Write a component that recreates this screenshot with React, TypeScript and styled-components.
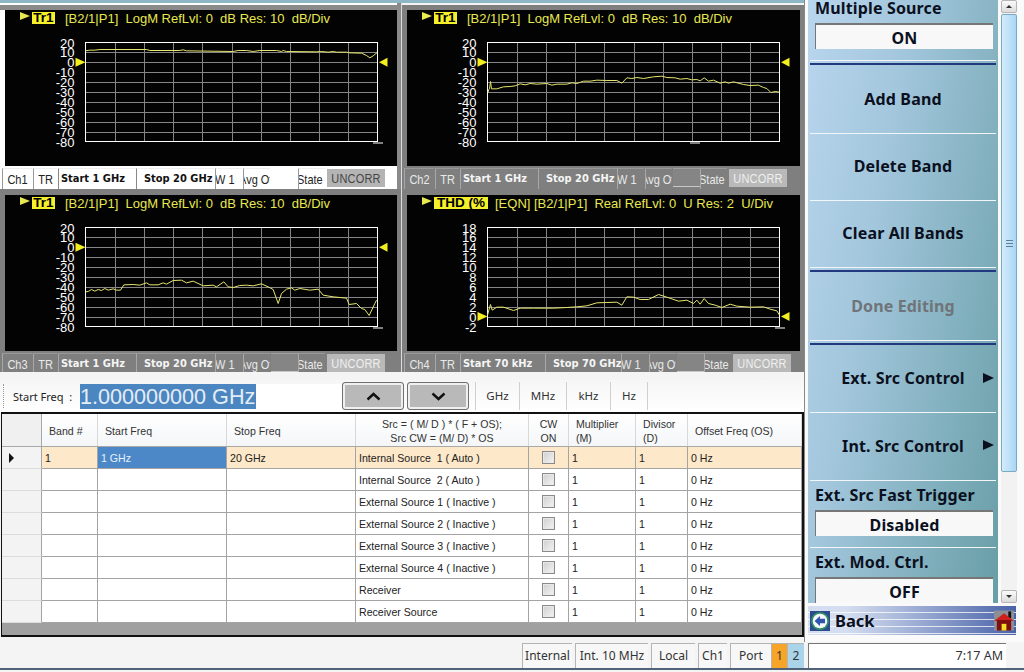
import React from "react";
import styled, { createGlobalStyle } from "styled-components";

const UI_FONT = `"Noto Sans", "Liberation Sans", sans-serif`;
const ARIAL = `"Liberation Sans", Arial, sans-serif`;
const BOLD_FONT = `"DejaVu Sans", Verdana, sans-serif`;
const YELLOW = "#e8e850";

const GRID_W = 292;
const GRID_H = 99;
const GRID_X = 80.5;
const GRID_Y = 8.5;

type Point = [number, number];

const GlobalStyle = createGlobalStyle`
  html, body {
    margin: 0;
    padding: 0;
    background: #f4f4f4;
    overflow: hidden;
  }
`;

const Screen = styled.div`
  width: 1024px;
  height: 672px;
  display: flex;
  flex-direction: column;
  background: #f4f4f4;
  overflow: hidden;
`;

const Main = styled.div`
  display: flex;
  height: 642px;
`;

const LeftColumn = styled.div`
  width: 804px;
  display: flex;
  flex-direction: column;
`;

const TopStrip = styled.div`
  height: 3px;
  background: #8fb6c4;
`;

const ChannelGrid = styled.div`
  display: grid;
  grid-template-columns: 401px 403px;
  grid-template-rows: 186px 183px;
  height: 369px;
`;

const ChannelBox = styled.div<{ $active?: boolean; $col: number; $row: number }>`
  display: flex;
  flex-direction: column;
  box-sizing: border-box;
  overflow: hidden;
  background: ${(p) =>
    p.$active
      ? "linear-gradient(#ffffff 2px, #8a8a8a 2px 7px, #ffffff 7px)"
      : p.$row === 0
        ? "linear-gradient(#f4f4f4 2px, #7f7f7f 2px)"
        : "#7f7f7f"};
  padding: ${(p) => (p.$row === 0 ? "7px" : "6px")} 4px 0 5px;
  border-left: ${(p) => (p.$col === 1 ? "1px solid #dcdcdc" : "0")};
  box-shadow: ${(p) => (p.$active ? "inset -4px 0 0 #8a8a8a" : "none")};
`;

const Plot = styled.div`
  height: 156px;
  background: #030303;
  flex: none;
  display: flex;
  flex-direction: column;
`;

const TitleRow = styled.div`
  height: 16px;
  margin-bottom: 8px;
  flex: none;
  display: flex;
  align-items: center;
  padding: 0 0 0 15px;
  color: ${YELLOW};
  font: 13px ${ARIAL};
  white-space: pre;
`;

const Pointer = styled.span`
  width: 0;
  height: 0;
  border-left: 10px solid ${YELLOW};
  border-top: 4px solid transparent;
  border-bottom: 4px solid transparent;
  margin: -4px 2px 0 0;
`;

const Badge = styled.span<{ $w: number }>`
  width: ${(p) => p.$w}px;
  height: 12px;
  background: #f6f02a;
  color: #000;
  font: 700 13.5px/12px ${ARIAL};
  text-align: center;
  margin-right: ${(p) => (p.$w > 30 ? 7 : 10)}px;
`;

const PlotSvg = styled.svg`
  display: block;
  flex: none;
`;

const AxisLabel = styled.text`
  fill: #ffffff;
  font: 13px ${ARIAL};
  text-anchor: end;
`;

const InfoBar = styled.div<{ $active?: boolean }>`
  height: 21px;
  margin: 2px 0 0 -3px;
  display: flex;
  align-items: stretch;
  color: ${(p) => (p.$active ? "#222" : "#e9e9e9")};
`;

const InfoCell = styled.div<{ $w: number; $active?: boolean }>`
  width: ${(p) => p.$w}px;
  flex: none;
  overflow: hidden;
  white-space: nowrap;
  font: 11px/21px ${ARIAL};
  text-align: center;
  margin-right: 1px;
  border-top: 1px solid ${(p) => (p.$active ? "#eeeeee" : "#999")};
  border-left: 1px solid ${(p) => (p.$active ? "#999" : "#a8a8a8")};
  box-sizing: border-box;
  span {
    display: inline-block;
    transform: scale(1, 1.2);
  }
`;

const ClippedCell = styled(InfoCell)<{ $shift: number }>`
  text-align: left;
  span {
    margin-left: ${(p) => p.$shift}px;
  }
`;

const BoldCell = styled.div<{ $w: number; $pad: number; $active?: boolean }>`
  width: ${(p) => p.$w}px;
  flex: none;
  font: 700 9.9px/20px ${BOLD_FONT};
  color: ${(p) => (p.$active ? "#111" : "#f5f5f5")};
  white-space: nowrap;
  padding-left: ${(p) => p.$pad}px;
  box-sizing: border-box;
  border-left: 1px solid ${(p) => (p.$active ? "#888" : "#a8a8a8")};
  border-top: 1px solid ${(p) => (p.$active ? "#eee" : "#999")};
`;

const BlankCell = styled.div<{ $active?: boolean }>`
  width: 27px;
  flex: none;
  margin-bottom: 2px;
  background: ${(p) => (p.$active ? "#ffffff" : "#858585")};
  border-bottom: 1px solid ${(p) => (p.$active ? "#fff" : "#c8c8c8")};
  border-top: 1px solid ${(p) => (p.$active ? "#fff" : "#a0a0a0")};
`;

const UncorrCell = styled(InfoCell)`
  height: 18px;
  line-height: 18px;
  margin: 1px 0 0 1px;
  background: ${(p) => (p.$active ? "#b4b4b4" : "#b9b9b9")};
  color: ${(p) => (p.$active ? "#444" : "#efefef")};
  border: 0;
  letter-spacing: 0.2px;
`;

const Gap = styled.div`
  height: 8px;
  background: #f4f4f4;
`;

const EntryBar = styled.div`
  height: 32px;
  display: flex;
  align-items: center;
  background: linear-gradient(#f6f6f6, #fff);
  padding-left: 3px;
  box-sizing: border-box;
  font: 11px ${UI_FONT};
  color: #222;
`;

const Grip = styled.div`
  width: 1px;
  height: 24px;
  border-left: 1px dotted #999;
`;

const EntryLabel = styled.div`
  width: 67px;
  padding-left: 8px;
  flex: none;
  white-space: pre;
`;

const EntryInput = styled.div`
  width: 262px;
  height: 25px;
  flex: none;
  background: #fff;
`;

const Selected = styled.span`
  display: inline-block;
  width: 176px;
  height: 25px;
  background: #4c86c0;
  color: #e4edf6;
  font: 21.6px/25px ${ARIAL};
  white-space: nowrap;
`;

const StepButton = styled.button`
  width: 62px;
  height: 28px;
  padding: 0;
  flex: none;
  margin-right: 3px;
  background: #b9b9b9;
  border: 1px solid #707070;
  border-radius: 3px;
  box-shadow: inset 0 0 0 2px #f0f0f0;
  display: flex;
  align-items: center;
  justify-content: center;
`;

const UnitList = styled.div`
  display: flex;
  margin-left: 3px;
  height: 28px;
  border-left: 1px solid #cfcfcf;
`;

const Unit = styled.div<{ $w: number }>`
  width: ${(p) => p.$w}px;
  text-align: center;
  border-right: 1px solid #cfcfcf;
  font: 11.5px/28px ${UI_FONT};
  color: #333;
`;

const Table = styled.div`
  height: 225px;
  margin-left: 1px;
  border: 2px solid #111;
  border-left-width: 1px;
  box-sizing: border-box;
  background: #a0a0a0;
  font: 10.6px ${ARIAL};
  color: #222;
  overflow: hidden;
`;

const COLUMNS = "40px 56px 129px 129px 173px 40px 67px 52px 1fr";

const HeaderRow = styled.div`
  display: grid;
  grid-template-columns: ${COLUMNS};
  height: 33px;
  background: linear-gradient(#ffffff, #f4f6f8);
  border-bottom: 1px solid #a8a8a8;
  box-sizing: border-box;
`;

const HeaderCell = styled.div<{ $center?: boolean }>`
  display: flex;
  flex-direction: column;
  justify-content: center;
  align-items: ${(p) => (p.$center ? "center" : "flex-start")};
  padding: 1px ${(p) => (p.$center ? "0" : "7px")} 0;
  line-height: 14px;
  border-right: 1px solid #d8d8d8;
  color: #333;
  white-space: pre;
`;

const CornerCell = styled(HeaderCell)`
  background: #f0f0f0;
  border-right: 1px solid #a8a8a8;
`;

const Row = styled.div<{ $current?: boolean }>`
  display: grid;
  grid-template-columns: ${COLUMNS};
  height: 22px;
  background: ${(p) => (p.$current ? "#fde8c9" : "#ffffff")};
`;

const Cell = styled.div<{ $selected?: boolean }>`
  padding-left: 3px;
  line-height: 23px;
  border-right: 1px solid #a4a4a4;
  border-bottom: 1px solid #a4a4a4;
  white-space: pre;
  background: ${(p) => (p.$selected ? "#4c88c8" : "transparent")};
  color: ${(p) => (p.$selected ? "#e8f0f8" : "#222")};
  overflow: hidden;
`;

const RowHead = styled.div`
  background: #f3f3f3;
  border-right: 1px solid #a4a4a4;
  border-bottom: 1px solid #dcdcdc;
  display: flex;
  align-items: center;
  padding-left: 7px;
`;

const RowArrow = styled.span`
  width: 0;
  height: 0;
  border-left: 5px solid #111;
  border-top: 5px solid transparent;
  border-bottom: 5px solid transparent;
`;

const CheckCell = styled.div`
  display: flex;
  align-items: center;
  justify-content: center;
  border-right: 1px solid #a4a4a4;
  border-bottom: 1px solid #a4a4a4;
`;

const CheckBox = styled.span`
  width: 11px;
  height: 11px;
  border: 1px solid #8a8a8a;
  background: linear-gradient(135deg, #cfcfcf, #f4f4f4);
  box-shadow: inset 0 0 0 1px #e8e8e8;
`;

const RightColumn = styled.div`
  width: 220px;
  display: flex;
  flex-direction: column;
  padding: 0 0 0 3px;
  box-sizing: border-box;
  background: #fafafa;
  border-left: 1px solid #888;
`;

const KeyRow = styled.div`
  height: 603px;
  display: flex;
  flex: none;
`;

const KeyPanel = styled.div`
  width: 190px;
  height: 603px;
  overflow: hidden;
  flex: none;
  background: linear-gradient(100deg, #b9d6ef 0%, #a2c6dc 36%, #689ea6 100%);
  display: flex;
  flex-direction: column;
  align-items: stretch;
  color: #0b1020;
  font: 700 16px ${UI_FONT};
  letter-spacing: 0.15px;
`;

const FieldLabel = styled.div<{ $h: number }>`
  height: ${(p) => p.$h}px;
  padding-left: 7px;
  display: flex;
  align-items: flex-end;
  line-height: 18px;
  white-space: nowrap;
  flex: none;
`;

const FieldValue = styled.div`
  height: 26px;
  flex: none;
  margin: 6px 5px 0 7px;
  line-height: 27px;
  text-align: center;
  background: #f8f8f8;
  border-top: 2px solid #777;
  border-left: 1px solid #777;
  box-sizing: border-box;
`;

const Divider = styled.div<{ $double?: boolean; $mt?: number }>`
  flex: none;
  height: 1px;
  margin: ${(p) => p.$mt ?? 0}px 2px 0 2px;
  background: #f2f6f8;
  ${(p) => p.$double && "height: 6px; background: linear-gradient(#f2f6f8 0 1px, transparent 1px 3px, #22397f 3px 5px, transparent 5px);"}
`;

const SoftKey = styled.div<{ $disabled?: boolean; $h?: number }>`
  height: ${(p) => p.$h ?? 66}px;
  flex: none;
  box-sizing: border-box;
  padding-bottom: 2px;
  position: relative;
  display: flex;
  align-items: center;
  justify-content: center;
  color: ${(p) => (p.$disabled ? "#6f7478" : "#0b1020")};
  white-space: nowrap;
`;

const SubArrow = styled.span`
  position: absolute;
  right: 4px;
  top: 27px;
  width: 0;
  height: 0;
  border-left: 11px solid #0b1020;
  border-top: 5px solid transparent;
  border-bottom: 5px solid transparent;
`;

const ScrollBar = styled.div`
  width: 16px;
  margin-left: 3px;
  display: flex;
  flex-direction: column;
  background: #f2f2f2;
`;

const ScrollButton = styled.div`
  height: 13px;
  flex: none;
  background: linear-gradient(#fbfbfb, #dcdcdc);
  border: 1px solid #b5b5b5;
  border-radius: 2px;
  box-sizing: border-box;
  display: flex;
  align-items: center;
  justify-content: center;
`;

const ScrollArrow = styled.span<{ $down?: boolean }>`
  width: 0;
  height: 0;
  border-left: 3px solid transparent;
  border-right: 3px solid transparent;
  ${(p) => (p.$down ? "border-top: 3px solid #333;" : "border-bottom: 3px solid #333;")}
`;

const ScrollThumb = styled.div`
  height: 458px;
  flex: none;
  margin-top: 1px;
  background: linear-gradient(90deg, #d4ecfb, #a9d6f5);
  border: 1px solid #7aa9c6;
  border-radius: 2px;
  box-sizing: border-box;
  display: flex;
  align-items: center;
  justify-content: center;
`;

const ThumbGrip = styled.span`
  width: 7px;
  height: 7px;
  background: repeating-linear-gradient(#5d7f95 0 1px, transparent 1px 3px);
`;

const ScrollTrack = styled.div`
  flex: 1;
`;

const BackBar = styled.div`
  height: 29px;
  width: 208px;
  margin-top: 3px;
  flex: none;
  display: flex;
  align-items: center;
  justify-content: space-between;
  padding: 0 2px;
  box-sizing: border-box;
  background:
    repeating-linear-gradient(transparent 0 6px, rgba(255, 255, 255, 0.75) 6px 7px),
    linear-gradient(90deg, #d5def0 0%, #d5def0 18%, #a0b0d6 50%, #4a63a8 100%);
`;

const BackLabel = styled.div`
  display: flex;
  align-items: center;
  gap: 5px;
  font: 700 16.5px ${UI_FONT};
  color: #0a0f20;
`;

const StatusBar = styled.div`
  height: 28px;
  display: flex;
  box-sizing: border-box;
  padding: 1px 0 0 0;
  border-bottom: 2px solid #4f6478;
  justify-content: flex-end;
  font: 12px ${UI_FONT};
  color: #333;
`;

const StatusItem = styled.div<{ $w: number; $bg?: string }>`
  width: ${(p) => p.$w}px;
  height: 25px;
  flex: none;
  margin-right: ${(p) => (p.$bg ? 0 : 3)}px;
  line-height: 24px;
  text-align: center;
  box-sizing: border-box;
  background: ${(p) => p.$bg ?? "#f7f7f7"};
  border-top: 1px solid #b4b4b4;
  border-left: 1px solid #b4b4b4;
`;

const TimeBox = styled.div`
  width: 198px;
  height: 25px;
  margin: 0 18px 0 4px;
  flex: none;
  padding-right: 3px;
  text-align: right;
  box-sizing: border-box;
  background: #ffffff;
  border-top: 1px solid #777;
  border-left: 1px solid #777;
  font: 12.5px/24px ${UI_FONT};
`;

const LOG_LABELS = ["20", "10", "0", "-10", "-20", "-30", "-40", "-50", "-60", "-70", "-80"];
const THD_LABELS = ["18", "16", "14", "12", "10", "8", "6", "4", "2", "0", "-2"];

// trace points read off the 3x crops, [x, y] on that crop
const TRACE_1: Point[] = [[257,152],[270,150],[285,150],[300,148],[440,148],[450,151],[540,151],[550,149],[560,152],[700,154],[715,151],[740,151],[760,154],[780,151],[830,151],[845,154],[850,151],[860,154],[950,155],[965,154],[985,156],[1000,154],[1010,156],[1040,156],[1050,158],[1085,159],[1100,166],[1110,173],[1120,167],[1132,157]];
const TRACE_2: Point[] = [[263,278],[266,268],[268,266],[271,244],[274,266],[290,266],[310,260],[330,259],[345,257],[360,251],[375,254],[390,250],[410,252],[440,250],[455,255],[470,252],[500,252],[515,248],[530,250],[550,243],[570,243],[590,240],[620,241],[650,241],[665,249],[680,233],[695,235],[710,232],[730,235],[760,230],[785,228],[800,232],[825,233],[840,237],[860,235],[875,239],[890,238],[900,242],[912,233],[925,243],[940,240],[960,249],[975,245],[985,249],[1000,245],[1030,253],[1050,256],[1075,255],[1090,262],[1100,265],[1112,277],[1125,274],[1138,276]];
const TRACE_3: Point[] = [[257,305],[265,304],[275,298],[285,303],[295,298],[305,301],[315,295],[325,300],[340,296],[350,300],[362,300],[372,284],[400,283],[420,285],[440,278],[450,284],[475,284],[490,278],[500,282],[520,271],[545,270],[560,278],[580,273],[610,287],[640,285],[650,290],[672,275],[685,290],[700,292],[720,286],[740,285],[760,287],[785,281],[805,290],[820,298],[835,340],[845,310],[860,297],[875,293],[885,300],[900,295],[930,300],[955,297],[970,315],[1000,320],[1040,324],[1048,343],[1070,340],[1085,355],[1095,358],[1108,376],[1125,340],[1130,330]];
const TRACE_4: Point[] = [[262,375],[266,360],[271,343],[276,360],[290,351],[310,351],[340,361],[360,354],[400,354],[460,354],[500,352],[530,350],[560,347],[590,338],[620,337],[650,336],[665,345],[680,320],[700,321],[720,328],[745,328],[775,313],[800,321],[835,333],[860,330],[880,340],[890,330],[900,342],[912,325],[925,340],[945,345],[965,352],[990,342],[1010,348],[1050,351],[1090,350],[1110,357],[1130,362],[1138,375]];

interface ChannelData {
  id: string;
  badge: string;
  badgeW: number;
  title: string;
  labels: string[];
  trace: Point[];
  origin: Point;
  refRow: number;
  tickX: number;
  start: string;
  stop: string;
  startW: number;
  stopW: number;
  col: number;
  row: number;
  active?: boolean;
}

const LOG_TITLE = "[B2/1|P1]  LogM RefLvl: 0  dB Res: 10  dB/Div";

const CHANNELS: ChannelData[] = [
  { id: "Ch1", badge: "Tr1", badgeW: 23, title: LOG_TITLE, labels: LOG_LABELS, trace: TRACE_1, origin: [257, 127], refRow: 2, tickX: 368, start: "Start 1 GHz", stop: "Stop 20 GHz", startW: 78, stopW: 79, col: 0, row: 0, active: true },
  { id: "Ch2", badge: "Tr1", badgeW: 23, title: LOG_TITLE, labels: LOG_LABELS, trace: TRACE_2, origin: [262, 127], refRow: 2, tickX: 283, start: "Start 1 GHz", stop: "Stop 20 GHz", startW: 78, stopW: 79, col: 1, row: 0 },
  { id: "Ch3", badge: "Tr1", badgeW: 23, title: LOG_TITLE, labels: LOG_LABELS, trace: TRACE_3, origin: [257, 112], refRow: 2, tickX: 368, start: "Start 1 GHz", stop: "Stop 20 GHz", startW: 78, stopW: 79, col: 0, row: 1 },
  { id: "Ch4", badge: "THD (%", badgeW: 54, title: "[EQN] [B2/1|P1]  Real RefLvl: 0  U Res: 2  U/Div", labels: THD_LABELS, trace: TRACE_4, origin: [262, 112], refRow: 9, tickX: 368, start: "Start 70 kHz", stop: "Stop 70 GHz", startW: 85, stopW: 76, col: 1, row: 1 },
];

const TABLE_SOURCES = [
  "Internal Source  1 ( Auto )",
  "Internal Source  2 ( Auto )",
  "External Source 1 ( Inactive )",
  "External Source 2 ( Inactive )",
  "External Source 3 ( Inactive )",
  "External Source 4 ( Inactive )",
  "Receiver",
  "Receiver Source",
];

const DIVISIONS = Array.from({ length: 11 }, (_, i) => i);

function ChannelPlot({ data }: { data: ChannelData }) {
  const points = data.trace
    .map(([x, y]) => `${(x - data.origin[0]) / 3 + GRID_X},${(y - data.origin[1]) / 3 + GRID_Y}`)
    .join(" ");
  const refY = GRID_Y + (GRID_H / 10) * data.refRow;
  const right = GRID_X + GRID_W;
  return (
    <PlotSvg width="392" height="122">
      {data.labels.map((label, i) => (
        <AxisLabel key={label} x={GRID_X - 11} y={GRID_Y + (GRID_H / 10) * i + 5}>
          {label}
        </AxisLabel>
      ))}
      {DIVISIONS.slice(1, 10).map((i) => (
        <g key={i} stroke="#858585" strokeWidth="1">
          <line x1={Math.round(GRID_X + (GRID_W / 10) * i) + 0.5} x2={Math.round(GRID_X + (GRID_W / 10) * i) + 0.5} y1={GRID_Y} y2={GRID_Y + GRID_H} />
          <line x1={GRID_X} x2={right} y1={Math.round(GRID_Y + (GRID_H / 10) * i) + 0.5} y2={Math.round(GRID_Y + (GRID_H / 10) * i) + 0.5} />
        </g>
      ))}
      <rect x={GRID_X} y={GRID_Y} width={GRID_W} height={GRID_H} fill="none" stroke="#ffffff" />
      <polyline points={points} fill="none" stroke="#e6e66e" strokeWidth="1" />
      <polygon points={`${GRID_X - 10},${refY - 4.5} ${GRID_X},${refY} ${GRID_X - 10},${refY + 4.5}`} fill="#f2ee20" />
      <polygon points={`${right + 10},${refY - 4.5} ${right + 1.5},${refY} ${right + 10},${refY + 4.5}`} fill="#f2ee20" />
      <line x1={data.tickX} x2={data.tickX + 10} y1={GRID_Y + GRID_H + 1.5} y2={GRID_Y + GRID_H + 1.5} stroke="#ffffff" />
    </PlotSvg>
  );
}

function Channel({ data }: { data: ChannelData }) {
  const active = data.active;
  return (
    <ChannelBox $active={active} $col={data.col} $row={data.row}>
      <Plot>
        <TitleRow>
          <Pointer />
          <Badge $w={data.badgeW}>{data.badge}</Badge>
          {data.title}
        </TitleRow>
        <ChannelPlot data={data} />
      </Plot>
      <InfoBar $active={active}>
        <InfoCell $w={30} $active={active}>
          <span>{data.id}</span>
        </InfoCell>
        <InfoCell $w={24} $active={active}>
          <span>TR</span>
        </InfoCell>
        <BoldCell $w={data.startW} $pad={2} $active={active}>
          {data.start}
        </BoldCell>
        <BoldCell $w={data.stopW} $pad={7} $active={active}>
          {data.stop}
        </BoldCell>
        <ClippedCell $w={27} $shift={-1} $active={active}>
          <span>W 1</span>
        </ClippedCell>
        <ClippedCell $w={27} $shift={-5} $active={active}>
          <span>Avg Off</span>
        </ClippedCell>
        <BlankCell $active={active} />
        <ClippedCell $w={27} $shift={-2} $active={active}>
          <span>State</span>
        </ClippedCell>
        <UncorrCell $w={58} $active={active}>
          <span>UNCORR</span>
        </UncorrCell>
      </InfoBar>
    </ChannelBox>
  );
}

function Chevron({ up }: { up?: boolean }) {
  return (
    <svg width="15" height="9" viewBox="0 0 15 9">
      <polyline points={up ? "1.5,7.5 7.5,2 13.5,7.5" : "1.5,1.5 7.5,7 13.5,1.5"} fill="none" stroke="#111" strokeWidth="2.4" />
    </svg>
  );
}

function BackIcon() {
  return (
    <svg width="20" height="20" viewBox="0 0 22 22">
      <rect width="22" height="22" fill="#2c4a8c" />
      <circle cx="11" cy="11" r="10" fill="#2f8f6a" />
      <circle cx="11" cy="11" r="8" fill="#f4f7fb" />
      <path d="M5 11 L11 5.5 V8.5 H16.5 V13.5 H11 V16.5 Z" fill="#2f55b0" />
    </svg>
  );
}

function HomeIcon() {
  return (
    <svg width="20" height="21" viewBox="0 0 21 21">
      <rect width="21" height="21" fill="#8e8e96" />
      <rect x="15" y="1" width="3" height="7" fill="#111" />
      <path d="M0 11 L10.5 3 L21 11 Z" fill="#d0201c" />
      <rect x="3" y="10" width="15" height="11" fill="#7c1010" />
      <rect x="8" y="14" width="5" height="7" fill="#f4e020" />
    </svg>
  );
}

export default function App() {
  return (
    <Screen>
      <GlobalStyle />
      <Main>
        <LeftColumn>
          <TopStrip />
          <ChannelGrid>
            {CHANNELS.map((channel) => (
              <Channel key={channel.id} data={channel} />
            ))}
          </ChannelGrid>
          <Gap />
          <EntryBar>
            <Grip />
            <EntryLabel>Start Freq  :</EntryLabel>
            <EntryInput>
              <Selected>1.000000000 GHz</Selected>
            </EntryInput>
            <StepButton>
              <Chevron up />
            </StepButton>
            <StepButton>
              <Chevron />
            </StepButton>
            <UnitList>
              <Unit $w={43}>GHz</Unit>
              <Unit $w={46}>MHz</Unit>
              <Unit $w={43}>kHz</Unit>
              <Unit $w={36}>Hz</Unit>
            </UnitList>
          </EntryBar>
          <Table>
            <HeaderRow>
              <CornerCell />
              <HeaderCell>Band #</HeaderCell>
              <HeaderCell>Start Freq</HeaderCell>
              <HeaderCell>Stop Freq</HeaderCell>
              <HeaderCell $center>
                <div>Src = ( M/ D ) * ( F + OS);</div>
                <div>Src CW = (M/ D) * OS</div>
              </HeaderCell>
              <HeaderCell $center>
                <div>CW</div>
                <div>ON</div>
              </HeaderCell>
              <HeaderCell>
                <div>Multiplier</div>
                <div>(M)</div>
              </HeaderCell>
              <HeaderCell>
                <div>Divisor</div>
                <div>(D)</div>
              </HeaderCell>
              <HeaderCell>Offset Freq (OS)</HeaderCell>
            </HeaderRow>
            {TABLE_SOURCES.map((source, i) => (
              <Row key={source} $current={i === 0}>
                <RowHead>{i === 0 && <RowArrow />}</RowHead>
                <Cell>{i === 0 ? "1" : ""}</Cell>
                <Cell $selected={i === 0}>{i === 0 ? "1 GHz" : ""}</Cell>
                <Cell>{i === 0 ? "20 GHz" : ""}</Cell>
                <Cell>{source}</Cell>
                <CheckCell>
                  <CheckBox />
                </CheckCell>
                <Cell>1</Cell>
                <Cell>1</Cell>
                <Cell>0 Hz</Cell>
              </Row>
            ))}
          </Table>
        </LeftColumn>
        <RightColumn>
          <KeyRow>
            <KeyPanel>
              <FieldLabel $h={17}>Multiple Source</FieldLabel>
              <FieldValue>ON</FieldValue>
              <Divider $double $mt={11} />
              <SoftKey $h={67}>Add Band</SoftKey>
              <Divider />
              <SoftKey>Delete Band</SoftKey>
              <Divider />
              <SoftKey>Clear All Bands</SoftKey>
              <Divider $double />
              <SoftKey $h={67} $disabled>Done Editing</SoftKey>
              <Divider $double />
              <SoftKey>
                Ext. Src Control
                <SubArrow />
              </SoftKey>
              <Divider />
              <SoftKey $h={67}>
                Int. Src Control
                <SubArrow />
              </SoftKey>
              <Divider />
              <FieldLabel $h={23}>Ext. Src Fast Trigger</FieldLabel>
              <FieldValue>Disabled</FieldValue>
              <Divider $mt={11} />
              <FieldLabel $h={23}>Ext. Mod. Ctrl.</FieldLabel>
              <FieldValue>OFF</FieldValue>
            </KeyPanel>
            <ScrollBar>
              <ScrollButton>
                <ScrollArrow />
              </ScrollButton>
              <ScrollThumb>
                <ThumbGrip />
              </ScrollThumb>
              <ScrollTrack />
              <ScrollButton>
                <ScrollArrow $down />
              </ScrollButton>
            </ScrollBar>
          </KeyRow>
          <BackBar>
            <BackLabel>
              <BackIcon />
              Back
            </BackLabel>
            <HomeIcon />
          </BackBar>
        </RightColumn>
      </Main>
      <StatusBar>
        <StatusItem $w={50}>Internal</StatusItem>
        <StatusItem $w={73}>Int. 10 MHz</StatusItem>
        <StatusItem $w={44}>Local</StatusItem>
        <StatusItem $w={29}>Ch1</StatusItem>
        <StatusItem $w={41} $bg="#f7f7f7">Port</StatusItem>
        <StatusItem $w={16} $bg="#f7a528">1</StatusItem>
        <StatusItem $w={17} $bg="#a9d4ea">2</StatusItem>
        <TimeBox>7:17 AM</TimeBox>
      </StatusBar>
    </Screen>
  );
}
